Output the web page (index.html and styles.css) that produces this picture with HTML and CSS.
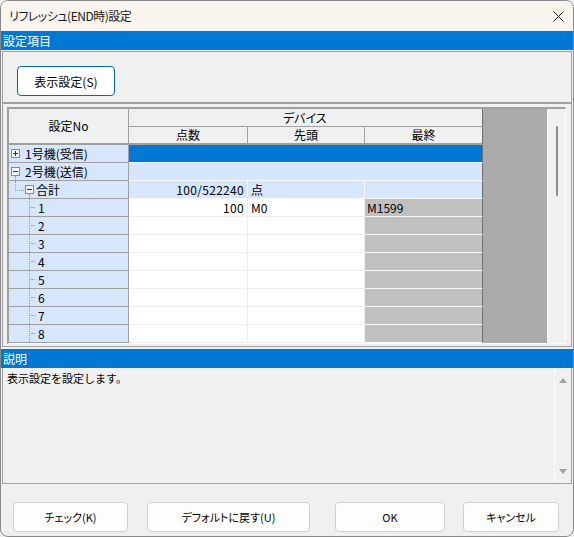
FILE: index.html
```html
<!DOCTYPE html>
<html lang="ja">
<head>
<meta charset="utf-8">
<title>リフレッシュ(END時)設定</title>
<link rel="stylesheet" href="styles.css">
</head>
<body>
<div class="window">
  <div class="titlebar">
    <span class="title">リフレッシュ(END時)設定</span>
    <svg class="close" width="11" height="11" viewBox="0 0 11 11"><path d="M0.5 0.5L10.5 10.5M10.5 0.5L0.5 10.5" stroke="#1a1a1a" stroke-width="1"/></svg>
  </div>
  <div class="section-bar">設定項目</div>
  <div class="top-panel">
    <button class="btn btn-primary">表示設定(S)</button>
  </div>
  <div class="grid-panel">
    <div class="grid-frame">
      <div class="grid">
        <div class="c hd hd-no">設定No</div>
        <div class="c hd hd-dev">デバイス</div>
        <div class="c hd hd-col">点数</div>
        <div class="c hd hd-col">先頭</div>
        <div class="c hd hd-col hd-last">最終</div>

        <div class="c tr tr-top"><svg class="tbox" width="9" height="9" viewBox="0 0 9 9"><rect x="0.5" y="0.5" width="8" height="8" fill="#f4f6fa" stroke="#8a8a8a"/><path d="M2 4.5h5M4.5 2v5" stroke="#22306a"/></svg><span>1号機(受信)</span></div>
        <div class="c sel"></div>

        <div class="c tr tr-top tr-open"><svg class="tbox" width="9" height="9" viewBox="0 0 9 9"><rect x="0.5" y="0.5" width="8" height="8" fill="#f4f6fa" stroke="#8a8a8a"/><path d="M2 4.5h5" stroke="#22306a"/></svg><span>2号機(送信)</span></div>
        <div class="c hl"></div>

        <div class="c tr tr-sum"><svg class="tbox" width="9" height="9" viewBox="0 0 9 9"><rect x="0.5" y="0.5" width="8" height="8" fill="#f4f6fa" stroke="#8a8a8a"/><path d="M2 4.5h5" stroke="#22306a"/></svg><span>合計</span></div>
        <div class="c sum num">100/522240</div>
        <div class="c sum txt">点</div>
        <div class="c sum sum-last"></div>

        <div class="c tr tr-child"><span>1</span></div>
        <div class="c w num">100</div>
        <div class="c w txt">M0</div>
        <div class="c g txt">M1599</div>

        <div class="c tr tr-child"><span>2</span></div>
        <div class="c w"></div>
        <div class="c w"></div>
        <div class="c g"></div>

        <div class="c tr tr-child"><span>3</span></div>
        <div class="c w"></div>
        <div class="c w"></div>
        <div class="c g"></div>

        <div class="c tr tr-child"><span>4</span></div>
        <div class="c w"></div>
        <div class="c w"></div>
        <div class="c g"></div>

        <div class="c tr tr-child"><span>5</span></div>
        <div class="c w"></div>
        <div class="c w"></div>
        <div class="c g"></div>

        <div class="c tr tr-child"><span>6</span></div>
        <div class="c w"></div>
        <div class="c w"></div>
        <div class="c g"></div>

        <div class="c tr tr-child"><span>7</span></div>
        <div class="c w"></div>
        <div class="c w"></div>
        <div class="c g"></div>

        <div class="c tr tr-child"><span>8</span></div>
        <div class="c w"></div>
        <div class="c w"></div>
        <div class="c g"></div>
      </div>
      <div class="gray-fill"></div>
      <div class="vscroll"><div class="thumb"></div></div>
    </div>
  </div>
  <div class="section-bar section-bar-desc">説明</div>
  <div class="desc">
    <p class="desc-text">表示設定を設定します。</p>
    <div class="desc-scroll">
      <span class="arrow arrow-up"></span>
      <span class="arrow arrow-down"></span>
    </div>
  </div>
  <div class="footer">
    <button class="btn btn-check">チェック(K)</button>
    <button class="btn btn-default">デフォルトに戻す(U)</button>
    <button class="btn btn-ok">OK</button>
    <button class="btn btn-cancel">キャンセル</button>
  </div>
</div>
</body>
</html>
```

FILE: styles.css
```css
* { box-sizing: border-box; }

body {
  margin: 0;
  background: #f0f0f0;
  font-family: "Noto Sans CJK JP", "Noto Sans", sans-serif;
  color: #000;
}

.window {
  width: 574px;
  height: 537px;
  border: 1px solid #8a8a8a;
  border-radius: 8px;
  background: #f0f0f0;
  display: flex;
  flex-direction: column;
  overflow: hidden;
}

.titlebar {
  flex: none;
  height: 30px;
  background: #faf4ee;
  display: flex;
  align-items: center;
  justify-content: space-between;
  padding: 0 9px 0 8px;
  font-size: 12px;
  color: #1a1a1a;
}

.title {
  font-feature-settings: "palt";
  letter-spacing: -0.5px;
  line-height: 16px;
}

.close { display: block; }

.section-bar {
  flex: none;
  height: 19px;
  background: #0078d4;
  color: #fff;
  font-size: 12px;
  line-height: 19px;
  padding-left: 2px;
}

.section-bar-desc { margin-top: 2px; }

.top-panel {
  flex: none;
  margin: 1px 1px 0 1px;
  height: 52px;
  border: 1px solid #a0a0a0;
  padding: 14px 0 0 14px;
}

.btn {
  display: block;
  height: 30px;
  border: 1px solid #d0d0d0;
  border-radius: 4px;
  background: #fdfdfd;
  font-family: "Noto Sans CJK JP", "Noto Sans", sans-serif;
  font-size: 11px;
  color: #000;
  font-feature-settings: "palt";
  padding: 0;
}

.btn-primary {
  width: 98px;
  border-color: #0067c0;
  background: #fff;
  font-size: 12px;
  font-feature-settings: normal;
}

.grid-panel {
  flex: none;
  margin: 0 1px;
  height: 244px;
  border: 1px solid #a0a0a0;
  padding: 3px 5px 2px 4px;
}

.grid-frame {
  display: flex;
  height: 237px;
  border-top: 2px solid #a0a0a0;
  border-left: 2px solid #a0a0a0;
  border-right: 1px solid #fdfdfd;
  border-bottom: 1px solid #fdfdfd;
  overflow: hidden;
}

.grid {
  flex: none;
  display: grid;
  grid-template-columns: 120px 119px 117px 118px;
  grid-template-rows: repeat(13, 18px);
  width: 474px;
}

.c {
  border-right: 1px solid #a0a0a0;
  border-bottom: 1px solid #a0a0a0;
  font-size: 12px;
  line-height: 17px;
  white-space: nowrap;
  overflow: hidden;
}

.hd {
  background: #f0f0f0;
  text-align: center;
}

.hd-no {
  grid-row: span 2;
  border-bottom-width: 2px;
  line-height: 34px;
}

.hd-dev {
  grid-column: span 3;
  border-right-color: #6e6e6e;
  font-feature-settings: "palt";
  text-align: left;
  padding-left: 154px;
}

.hd-col {
  border-bottom-width: 2px;
  line-height: 16px;
}

.hd-last { border-right-color: #6e6e6e; }

.tr {
  position: relative;
  background: #d6e6fc;
  display: flex;
  align-items: center;
}

.tbox {
  display: block;
  flex: none;
}

.tr-top { padding-left: 2px; }
.tr-top .tbox { margin-right: 5px; }

.tr-open::after {
  content: "";
  position: absolute;
  left: 6px;
  top: 13px;
  bottom: 0;
  border-left: 1px dotted #9a9a9a;
}

.tr-sum { padding-left: 16px; }
.tr-sum .tbox { margin-right: 2px; }

.tr-sum::before {
  content: "";
  position: absolute;
  left: 6px;
  top: 0;
  width: 10px;
  height: 9px;
  border-left: 1px dotted #9a9a9a;
  border-bottom: 1px dotted #9a9a9a;
}

.tr-sum::after {
  content: "";
  position: absolute;
  left: 20px;
  top: 13px;
  bottom: 0;
  border-left: 1px dotted #9a9a9a;
}

.tr-child { padding-left: 29px; }

.tr-child::before {
  content: "";
  position: absolute;
  left: 20px;
  top: 0;
  bottom: 0;
  border-left: 1px dotted #9a9a9a;
}

.tr-child::after {
  content: "";
  position: absolute;
  left: 22px;
  top: 8px;
  width: 4px;
  border-top: 1px dotted #9a9a9a;
}

.sel {
  grid-column: span 3;
  background: #0078d4;
  border-right-color: #6e6e6e;
  border-bottom-color: #eef4fd;
}

.hl {
  grid-column: span 3;
  background: #d6e6fc;
  border-right-color: #6e6e6e;
  border-bottom-color: #f6f9fe;
}

.sum {
  background: #d6e6fc;
  border-color: #f6f9fe;
}

.sum-last { border-right-color: #6e6e6e; }

.w {
  background: #fff;
  border-color: #ededed;
}

.g {
  background: #c0c0c0;
  border-bottom-color: #f6f6f6;
  border-right-color: #6e6e6e;
}

.num {
  text-align: right;
  padding-right: 3px;
  letter-spacing: 0.3px;
}

.txt {
  padding-left: 3px;
}

.g.txt { padding-left: 2px; }

.gray-fill {
  flex: none;
  width: 65px;
  background: #ababab;
  border-right: 1px solid #f6f6f6;
}

.vscroll {
  flex: 1;
  background: #f0f0f0;
  padding: 17px 0 0 8px;
}

.thumb {
  width: 2px;
  height: 70px;
  background: #8c8c8c;
  border-radius: 1px;
}

.desc {
  flex: none;
  height: 116px;
  margin: 0 1px;
  border: 1px solid #a0a0a0;
  border-top: none;
  display: flex;
}

.desc-text {
  flex: 1;
  margin: 0;
  padding: 3px 0 0 4px;
  font-size: 11px;
  line-height: 14px;
}

.desc-scroll {
  flex: none;
  width: 17px;
  border-left: 1px solid #fbfbfb;
  display: flex;
  flex-direction: column;
  justify-content: space-between;
  align-items: center;
  padding: 10px 0 9px;
}

.arrow {
  display: block;
  width: 0;
  height: 0;
  border-left: 4px solid transparent;
  border-right: 4px solid transparent;
}

.arrow-up { border-bottom: 5px solid #a3a3a3; }
.arrow-down { border-top: 5px solid #a3a3a3; }

.footer {
  flex: 1;
  display: flex;
  align-items: flex-start;
  padding: 18px 0 0 12px;
}

.btn-check { width: 115px; }
.btn-default { width: 163px; margin-left: 19px; }
.btn-ok { width: 110px; margin-left: 25px; }
.btn-cancel { width: 96px; margin-left: 18px; }
```
